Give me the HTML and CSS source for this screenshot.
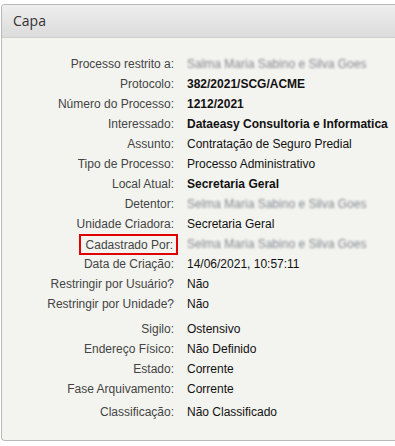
FILE: index.html
```html
<!DOCTYPE html>
<html lang="pt-BR">

<head>
    <meta charset="UTF-8">
    <meta name="viewport" content="width=device-width, initial-scale=1.0">
    <title>Capa</title>
    <link rel="stylesheet" href="styles.css">
</head>

<body>
    <div class="panel">
        <div class="panel-header">Capa</div>
        <div class="panel-body">
            <div class="fields">
                <div class="label">Processo restrito a:</div>
                <div class="value blurred">Salma Maria Sabino e Silva Goes</div>

                <div class="label">Protocolo:</div>
                <div class="value bold">382/2021/SCG/ACME</div>

                <div class="label">Número do Processo:</div>
                <div class="value bold">1212/2021</div>

                <div class="label">Interessado:</div>
                <div class="value bold">Dataeasy Consultoria e Informatica</div>

                <div class="label">Assunto:</div>
                <div class="value">Contratação de Seguro Predial</div>

                <div class="label">Tipo de Processo:</div>
                <div class="value">Processo Administrativo</div>

                <div class="label">Local Atual:</div>
                <div class="value bold">Secretaria Geral</div>

                <div class="label">Detentor:</div>
                <div class="value blurred">Selma Maria Sabino e Silva Goes</div>

                <div class="label">Unidade Criadora:</div>
                <div class="value">Secretaria Geral</div>

                <div class="label"><span class="highlight">Cadastrado Por:</span></div>
                <div class="value blurred">Selma Maria Sabino e Silva Goes</div>

                <div class="label">Data de Criação:</div>
                <div class="value">14/06/2021, 10:57:11</div>

                <div class="label">Restringir por Usuário?</div>
                <div class="value">Não</div>

                <div class="label">Restringir por Unidade?</div>
                <div class="value">Não</div>
            </div>

            <div class="fields second">
                <div class="label">Sigilo:</div>
                <div class="value">Ostensivo</div>

                <div class="label">Endereço Físico:</div>
                <div class="value">Não Definido</div>

                <div class="label">Estado:</div>
                <div class="value">Corrente</div>

                <div class="label">Fase Arquivamento:</div>
                <div class="value">Corrente</div>
            </div>

            <div class="fields third">
                <div class="label">Classificação:</div>
                <div class="value">Não Classificado</div>
            </div>
        </div>
    </div>
</body>

</html>
```

FILE: styles.css
```css
body {
    margin: 0;
    background: #ffffff;
    font-family: "Liberation Sans", Arial, sans-serif;
}

.panel {
    margin: 4px 0 0 1px;
    height: 435px;
    border: 1px solid #b9b9b9;
    border-right: none;
    border-radius: 4px 0 0 4px;
    background: #f3f3ef;
    overflow: hidden;
}

.panel-header {
    height: 32px;
    line-height: 32px;
    padding-left: 11px;
    font-family: "Open Sans", sans-serif;
    font-size: 14px;
    color: #333;
    background: linear-gradient(#eeeeee, #dcdcdc);
    border-bottom: 1px solid #cfcfcf;
}

.panel-body {
    padding-top: 16px;
}

.fields {
    display: grid;
    grid-template-columns: 172px 1fr;
    column-gap: 13px;
    grid-auto-rows: 20px;
    align-items: center;
}

.fields.second {
    margin-top: 5px;
}

.fields.third {
    margin-top: 3px;
}

.label {
    text-align: right;
    font-size: 12px;
    color: #444;
    white-space: nowrap;
}

.value {
    font-size: 12px;
    color: #111;
    white-space: nowrap;
}

.value.bold {
    font-weight: bold;
}

.value.blurred {
    color: #868890;
    filter: blur(1px);
}

.highlight {
    display: inline-block;
    margin-right: -4px;
    padding: 2px 3px 1px 5px;
    border: 2px solid #e00000;
}
```
